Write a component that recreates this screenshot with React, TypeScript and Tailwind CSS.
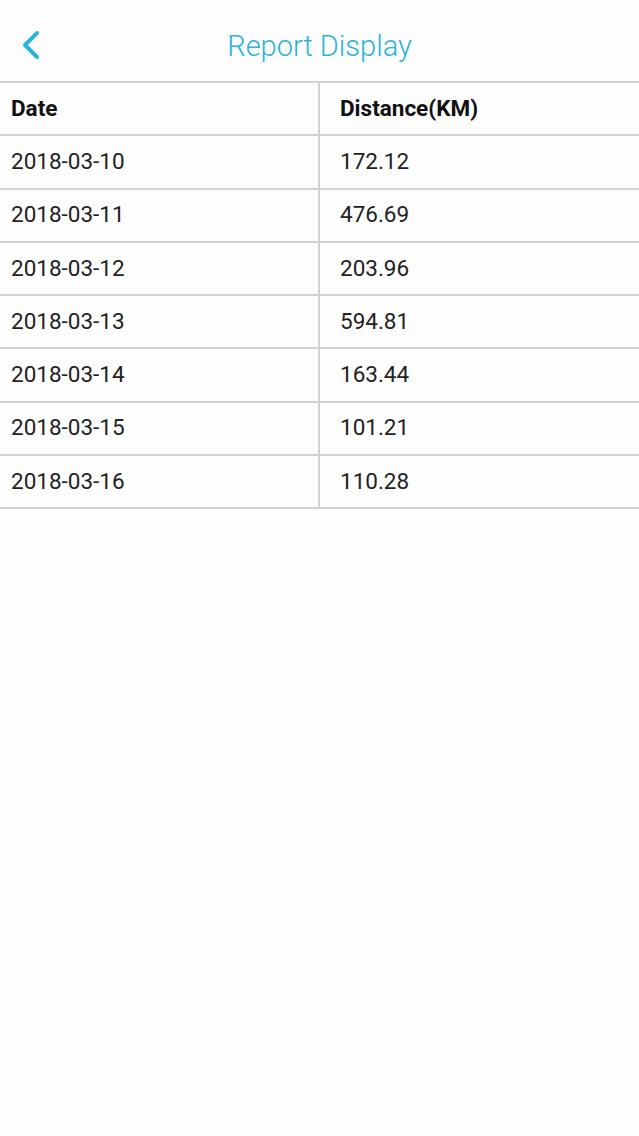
import React from 'react';

const rows: [string, string][] = [
  ['2018-03-10', '172.12'],
  ['2018-03-11', '476.69'],
  ['2018-03-12', '203.96'],
  ['2018-03-13', '594.81'],
  ['2018-03-14', '163.44'],
  ['2018-03-15', '101.21'],
  ['2018-03-16', '110.28'],
];

export default function App() {
  return (
    <div className="min-h-[1136px] w-[639px] bg-[#fefdfe] font-['Roboto',sans-serif]">
      {/* top bar */}
      <div className="relative flex h-[83px] items-center justify-center border-b-2 border-[#d2d2d4]">
        <button className="absolute left-[20px] top-[29px] text-[#2bb3df]">
          <svg width="22" height="32" viewBox="0 0 22 32" fill="none">
            <path d="M17 4 L5 16 L17 28" stroke="currentColor" strokeWidth="4" strokeLinecap="round" strokeLinejoin="round" />
          </svg>
        </button>
        <h1 className="mt-[12px] text-[29px] font-light text-[#2bb3df]">Report Display</h1>
      </div>

      {/* table */}
      <div>
        <div className="flex h-[53.25px] border-b-2 border-[#d2d2d4] text-[22.5px] font-bold text-[#111]">
          <div className="flex w-[320px] items-center border-r-2 border-[#d2d2d4] pl-[11px]">Date</div>
          <div className="flex flex-1 items-center pl-[20px]">Distance(KM)</div>
        </div>
        {rows.map(([date, km]) => (
          <div key={date} className="flex h-[53.25px] border-b-2 border-[#d2d2d4] text-[22.5px] text-[#222]">
            <div className="flex w-[320px] items-center border-r-2 border-[#d2d2d4] pl-[11px]">{date}</div>
            <div className="flex flex-1 items-center pl-[20px]">{km}</div>
          </div>
        ))}
      </div>
    </div>
  );
}
